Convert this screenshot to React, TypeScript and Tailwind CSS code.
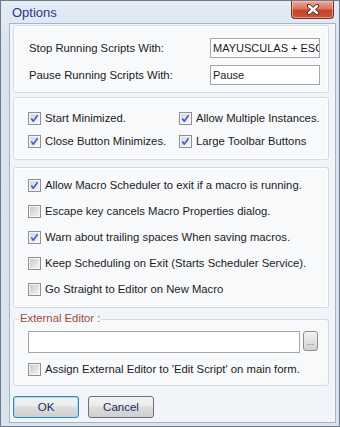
import React from "react";

const Check = ({ checked }: { checked?: boolean }) => (
  <svg width="13" height="13" viewBox="0 0 13 13" className="shrink-0 block">
    <defs>
      <linearGradient id="cbu" x1="0" y1="0" x2="1" y2="1">
        <stop offset="0" stopColor="#c6cad0" />
        <stop offset="1" stopColor="#f3f3f3" />
      </linearGradient>
      <linearGradient id="cbc" x1="0" y1="0" x2="1" y2="1">
        <stop offset="0" stopColor="#cfd8ee" />
        <stop offset="1" stopColor="#f2f5fb" />
      </linearGradient>
    </defs>
    <rect x="0.5" y="0.5" width="12" height="12" fill="#f6f6f6" stroke="#8e8f8f" />
    <rect x="2" y="2" width="9" height="9" fill={checked ? "url(#cbc)" : "url(#cbu)"} />
    {checked && (
      <path d="M3.3 6.5 L5.3 9.2 L9.6 3.2" fill="none" stroke="#4659ad" strokeWidth="1.5" strokeLinejoin="round" />
    )}
  </svg>
);

const Row = ({ checked, label }: { checked?: boolean; label: string }) => (
  <div className="flex items-center h-[16px] gap-[4px] whitespace-nowrap">
    <Check checked={checked} />
    <span>{label}</span>
  </div>
);

const Group = ({ className, children }: { className: string; children: React.ReactNode }) => (
  <div
    className={`rounded-[3px] border border-[#d3dae3] bg-[#f7f9fb] shadow-[inset_0_0_0_1px_#ffffff] ${className}`}
  >
    {children}
  </div>
);

const btnBase =
  "w-[66px] h-[22px] rounded-[3px] flex items-center justify-center text-[11.5px] text-[#1d2a66] bg-[linear-gradient(#f3f3f3_0%,#ebebeb_45%,#dddddd_50%,#cfcfcf_100%)]";

export default function App() {
  return (
    <div
      className="w-[340px] h-[427px] border border-[#6f7a88] bg-[linear-gradient(#e4ecf6,#d6e2f0_60px,#d9e4f1)] flex flex-col text-[#1b1b1b]"
      style={{ fontFamily: '"Liberation Sans", Arial, sans-serif' }}
    >
      {/* Title bar */}
      <div className="h-[22px] flex justify-between items-start shrink-0">
        <div className="pl-[11px] pt-[4px] text-[13px] leading-[16px] text-[#2b3488]">Options</div>
        <div className="mr-[5px] w-[43px] h-[18px] rounded-b-[4px] border border-t-0 border-[#7b3326] bg-[linear-gradient(#eaa99b_0%,#d9735f_45%,#c5442b_55%,#c9543a_100%)] shadow-[inset_0_0_0_1px_rgba(255,220,210,0.5)] flex items-center justify-center">
          <svg width="14" height="11" viewBox="0 0 14 11">
            <path d="M3 2 L11 9 M11 2 L3 9" stroke="#5a241a" strokeWidth="4.2" strokeLinecap="round" fill="none" />
            <path d="M3 2 L11 9 M11 2 L3 9" stroke="#ffffff" strokeWidth="2.4" strokeLinecap="round" fill="none" />
          </svg>
        </div>
      </div>

      {/* Client area */}
      <div className="flex-1 ml-[8px] mr-[3px] mb-[3px] border border-[#a9b4c2] bg-[#f1f4f8] pl-[3px] pr-[6px] pt-[1px] flex flex-col text-[11.3px] leading-[14px]">
        {/* Group 1 */}
        <Group className="h-[68px] pt-[12px] pl-[15px] pr-[8px] flex flex-col gap-[7px]">
          <div className="h-[20px] flex items-center justify-between">
            <span>Stop Running Scripts With:</span>
            <div className="w-[110px] h-[20px] border border-[#a2a8b0] bg-white pl-[2px] flex items-center overflow-hidden whitespace-nowrap text-[11px]">
              MAYUSCULAS + ESC
            </div>
          </div>
          <div className="h-[20px] flex items-center justify-between">
            <span>Pause Running Scripts With:</span>
            <div className="w-[110px] h-[20px] border border-[#a2a8b0] bg-white pl-[2px] flex items-center overflow-hidden whitespace-nowrap text-[11px]">
              Pause
            </div>
          </div>
        </Group>

        {/* Group 2 */}
        <Group className="mt-[4px] h-[63px] pt-[12px] pl-[14px] grid grid-cols-[151px_1fr] gap-y-[7px] content-start">
          <Row checked label="Start Minimized." />
          <Row checked label="Allow Multiple Instances." />
          <Row checked label="Close Button Minimizes." />
          <Row checked label="Large Toolbar Buttons" />
        </Group>

        {/* Group 3 */}
        <Group className="mt-[7px] h-[141px] pt-[9px] pl-[14px] flex flex-col gap-[10px]">
          <Row checked label="Allow Macro Scheduler to exit if a macro is running." />
          <Row label="Escape key cancels Macro Properties dialog." />
          <Row checked label="Warn about trailing spaces When saving macros." />
          <Row label="Keep Scheduling on Exit (Starts Scheduler Service)." />
          <Row label="Go Straight to Editor on New Macro" />
        </Group>

        {/* Group 4 */}
        <fieldset className="mt-[3px] rounded-[3px] border border-[#d3dae3] bg-[#f7f9fb] p-0 m-0">
          <legend className="ml-[5px] px-[1px] pb-[3px] text-[#a4473a] leading-[14px]">External Editor :</legend>
          <div className="pt-[3px] pl-[14px] pb-[8px] flex flex-col gap-[8px]">
            <div className="flex items-start gap-[3px]">
              <div className="w-[272px] h-[22px] border border-[#a2a8b0] bg-white" />
              <div className="w-[15px] h-[20px] rounded-[3px] border border-[#8e8f8f] bg-[linear-gradient(#f4f4f4,#e2e2e2_50%,#d2d2d2)] flex items-end justify-center pb-[4px] text-[9px] leading-[8px] text-[#6a6a6a]">
                ...
              </div>
            </div>
            <Row label="Assign External Editor to 'Edit Script' on main form." />
          </div>
        </fieldset>

        {/* Buttons */}
        <div className="mt-[10px] flex gap-[9px]">
          <div className={`${btnBase} border border-[#3c7fb1] shadow-[inset_0_0_0_1px_#a6e0f7]`}>OK</div>
          <div className={`${btnBase} border border-[#707070]`}>Cancel</div>
        </div>
      </div>
    </div>
  );
}
